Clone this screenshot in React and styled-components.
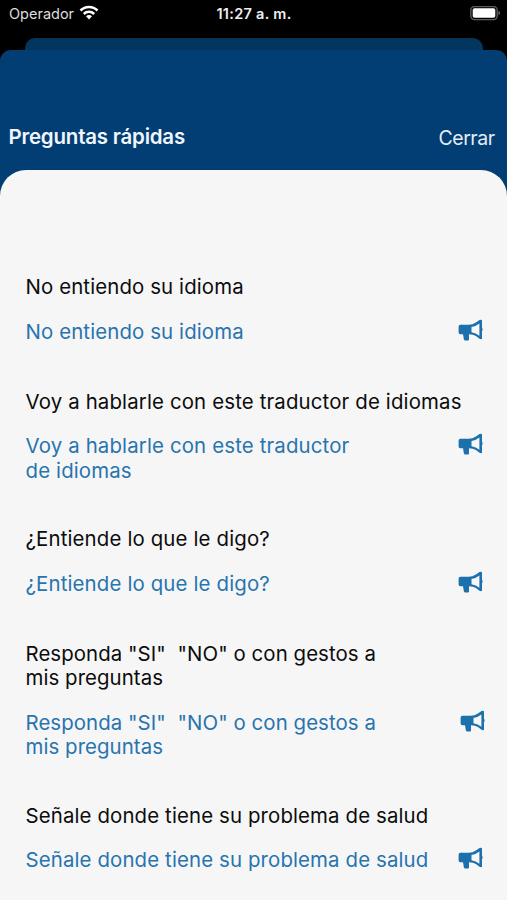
import React from "react";
import styled, { createGlobalStyle } from "styled-components";

const Global = createGlobalStyle`
  * { box-sizing: border-box; }
  body { margin: 0; background: #000; font-family: Inter, "Liberation Sans", sans-serif; }
`;
const Screen = styled.div`
  width: 507px; height: 900px; overflow: hidden; background: #000;
  display: flex; flex-direction: column;
`;
const StatusBar = styled.header`
  height: 38px; flex: none; padding: 5px 6px 0 9px; color: #fff;
  display: grid; grid-template-columns: 1fr auto 1fr; align-items: start;
  font-size: 14.5px; line-height: 18px;
`;
const Carrier = styled.div`
  display: flex; gap: 5px; color: #ddd;
`;
const Clock = styled.div`
  font-weight: 600; color: #eee; letter-spacing: 0.3px; margin-right: 2px;
`;
const BatterySlot = styled.div`display: flex; justify-content: flex-end; padding-top: 1px;`;
const BackSheet = styled.div`
  height: 12px; flex: none; margin: 0 24px 0 25px; background: #02365f; border-radius: 10px 10px 0 0;
`;
const Sheet = styled.main`
  flex: 1; background: #023e73; border-radius: 11px 11px 0 0;
  display: flex; flex-direction: column;
`;
const SheetHeader = styled.div`
  height: 120.4px; flex: none; padding: 0 12.5px 20.6px 8.5px; color: #f0f6fc;
  display: flex; justify-content: space-between; align-items: flex-end;
`;
const Title = styled.h1`
  margin: 0; font-size: 20.5px; line-height: 26px; font-weight: 600; letter-spacing: -0.22px;
`;
const Close = styled.button`
  border: 0; padding: 0; background: none; color: #e3edf7; font: inherit;
  font-size: 19.5px; line-height: 24px; letter-spacing: -0.5px;
`;
const Panel = styled.section`
  flex: 1; background: #f6f6f6; border-radius: 26px 26px 0 0; padding: 105px 0 0 25.5px;
  display: flex; flex-direction: column; gap: 44.5px;
`;
const Phrase = styled.article`
  display: flex; flex-direction: column; gap: 20px;
  font-size: 20.4px; line-height: 24.4px; white-space: pre;
  letter-spacing: ${p => p.$tracking}px;
`;
const Source = styled.div`color: #0c0c0c;`;
const Translation = styled.div`
  color: #2874ae; min-height: 25.4px; padding-right: ${p => p.$inset}px;
  display: flex; justify-content: space-between;
`;
const Horn = styled.svg`width: 25px; height: 22px; flex: none; margin-top: -1px;`;

const phrases = [
  { source: "No entiendo su idioma", tracking: 0.12 },
  {
    source: "Voy a hablarle con este traductor de idiomas",
    translated: "Voy a hablarle con este traductor\nde idiomas",
    tracking: 0.15,
  },
  { source: "¿Entiende lo que le digo?", tracking: 0.15 },
  { source: 'Responda "SI"  "NO" o con gestos a\nmis preguntas', tracking: 0.07, inset: 22.5 },
  { source: "Señale donde tiene su problema de salud", tracking: 0.13 },
];

const Wifi = () => (
  <svg width="20" height="16" viewBox="0 0 20 16" fill="none" stroke="#fff" strokeWidth="2.5">
    <path d="M1.5 5.5a12 12 0 0 1 17 0M4.8 9a7.4 7.4 0 0 1 10.4 0" />
    <path d="M10 14.5 7 11.3a4.2 4.2 0 0 1 6 0Z" fill="#fff" stroke="none" />
  </svg>
);
const Battery = () => (
  <svg width="31" height="15" viewBox="0 0 31 15">
    <rect x="0.8" y="0.6" width="26.4" height="13" rx="3.5" fill="none" stroke="#5c5c5c" strokeWidth="1.4" />
    <rect x="2.7" y="2.3" width="22.6" height="9.4" rx="1.8" fill="#fff" />
    <path d="M28.5 5v4.2q1.7-.6 1.7-2.1T28.5 5Z" fill="#666" />
  </svg>
);
const Megaphone = () => (
  <Horn viewBox="0 0 25 22">
    <path
      fill="#1c70ac"
      fillRule="evenodd"
      d="M22.9.7q1.1 0 1.1 1.1v7q.6.5.6 1.7t-.6 1.7v7q0 1.1-1.1 1.1l-1.4-.6-3.6-2.6q-2.7-1.8-6.9-1.9v5.4q0 1-1 1H7.2q-1 0-1.3-1L5 15.2H2.3Q.6 15 .6 13.2V7.7Q.6 5.9 2.4 5.7h8.2q4.2 0 7.3-2.3l3.6-2.3ZM21.4 4.4q-3.4 2.8-7.9 3.5v5.3q4.5.6 7.9 3.5Z"
    />
  </Horn>
);

export default function App() {
  return (
    <Screen>
      <Global />
      <StatusBar>
        <Carrier>Operador <Wifi /></Carrier>
        <Clock>11:27 a. m.</Clock>
        <BatterySlot><Battery /></BatterySlot>
      </StatusBar>
      <BackSheet />
      <Sheet>
        <SheetHeader><Title>Preguntas rápidas</Title><Close>Cerrar</Close></SheetHeader>
        <Panel>
          {phrases.map(({ source, translated = source, tracking, inset = 24 }) => (
            <Phrase key={source} $tracking={tracking}>
              <Source>{source}</Source>
              <Translation $inset={inset}><span>{translated}</span><Megaphone /></Translation>
            </Phrase>
          ))}
        </Panel>
      </Sheet>
    </Screen>
  );
}
